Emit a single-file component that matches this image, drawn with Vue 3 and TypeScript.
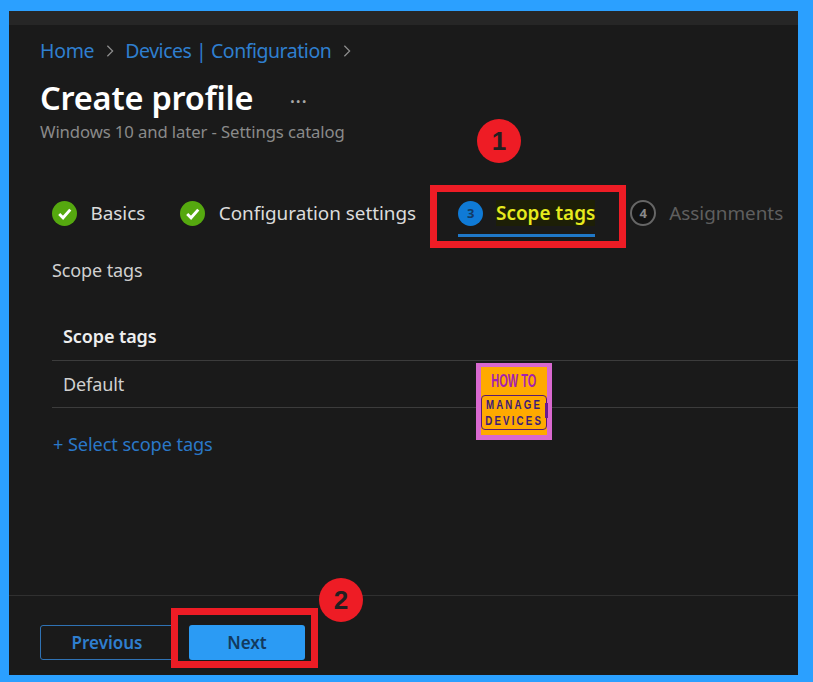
<script setup lang="ts">
interface Step { label: string; state: 'done' | 'current' | 'todo'; num?: number }
const steps: Step[] = [
  { label: 'Basics', state: 'done' },
  { label: 'Configuration settings', state: 'done' },
  { label: 'Scope tags', state: 'current', num: 3 },
  { label: 'Assignments', state: 'todo', num: 4 },
]
</script>

<template>
  <div class="frame">
    <main class="panel">
      <div class="strip"></div>
      <div class="body">
        <nav class="crumbs">
          <a>Home</a>
          <svg class="chev" viewBox="0 0 10 16"><path d="M2 2l6 6-6 6" /></svg>
          <a class="crumb-long">Devices | Configuration</a>
          <svg class="chev" viewBox="0 0 10 16"><path d="M2 2l6 6-6 6" /></svg>
        </nav>
        <div class="title-row">
          <h1>Create profile</h1>
          <span class="dots">···</span>
        </div>
        <p class="sub">Windows 10 and later - Settings catalog</p>

        <div class="steps">
          <div v-for="s in steps" :key="s.label" class="step" :class="s.state">
            <svg v-if="s.state === 'done'" class="ic" viewBox="0 0 26 26">
              <circle cx="13" cy="13" r="13" fill="#55a80f" />
              <path d="M7.5 13.5l4 4 7.5-8.5" fill="none" stroke="#fff" stroke-width="3" />
            </svg>
            <span v-else class="num">{{ s.num }}</span>
            <span class="lbl">{{ s.label }}</span>
          </div>
        </div>

        <div class="section-label">Scope tags</div>
        <div class="table">
          <div class="th">Scope tags</div>
          <div class="td">Default</div>
        </div>
        <a class="add">+ Select scope tags</a>
      </div>

      <footer class="foot">
        <button class="btn prev">Previous</button>
        <button class="btn next">Next</button>
      </footer>
    </main>

    <!-- annotations laid over the screenshot -->
    <div class="box box1"></div>
    <div class="box box2"></div>
    <div class="badge b1">1</div>
    <div class="badge b2">2</div>

    <div class="logo">
      <div class="logo-in">
        <div class="how">HOW TO</div>
        <div class="manage"><span>MANAGE</span><span>DEVICES</span></div>
      </div>
    </div>
  </div>
</template>

<style>
html, body { margin: 0; background: #2ba0ff; }
</style>

<style scoped>
.frame {
  position: relative;
  width: 813px;
  height: 682px;
  box-sizing: border-box;
  padding: 11px 15px 7px 9px;
  background: #2ba0ff;
  font-family: "Noto Sans", "Open Sans", sans-serif;
  overflow: hidden;
}
.panel {
  height: 100%;
  display: flex;
  flex-direction: column;
  background: #1a1a1a;
}
.strip { height: 14px; background: #262626; flex: none; }
.body { flex: 1; display: flex; flex-direction: column; padding: 12px 0 0 31px; min-height: 0; }
.crumbs { display: flex; align-items: center; height: 27px; font-size: 19.5px; color: #2f7fcf; letter-spacing: -0.3px; }
.crumb-long { letter-spacing: -0.47px; }
.chev { width: 10px; height: 14px; margin: 0 10.5px; fill: none; stroke: #8f8f8f; stroke-width: 1.4; }
.title-row { display: flex; align-items: center; height: 44px; margin-top: 12px; }
h1 { margin: 0; font-size: 32.5px; font-weight: 600; color: #fff; letter-spacing: -0.2px; line-height: 44px; }
.dots { margin-left: 36px; color: #a8a8a8; font-size: 22px; line-height: 22px; letter-spacing: 0; position: relative; top: 2px; }
.sub { margin: 1px 0 0; font-size: 16.7px; line-height: 22px; color: #8a8a8a; letter-spacing: -0.1px; }
.steps { display: flex; align-items: center; margin: 55px 0 0 12px; height: 30px; }
.step { display: flex; align-items: center; color: #dcdcdc; font-size: 18.9px; letter-spacing: -0.03px; }
.step .ic { width: 25px; height: 25px; margin-right: 13.5px; flex: none; }
.step:nth-child(1) { margin-right: 35px; }
.step:nth-child(2) { margin-right: 42px; }
.step:nth-child(3) { position: relative; margin-right: 35px; }
.step.current::after {
  content: "";
  position: absolute;
  left: 0; right: 0; bottom: -11px;
  height: 3px;
  background: #1f78c8;
}
.num {
  width: 25px; height: 25px; border-radius: 50%;
  display: flex; align-items: center; justify-content: center;
  font-size: 13px; font-weight: 700; margin-right: 13px; box-sizing: border-box; flex: none;
}
.current .num { background: #0f7ad6; color: #123a66; }
.current .lbl { color: #e6ea1e; font-weight: 600; background: #1d1f06; letter-spacing: 0; }
.todo { color: #5f5f5f; }
.todo .num { border: 2px solid #666; color: #8a8a8a; width: 26px; height: 26px; background: #131313; margin-right: 13px; }
.section-label { margin: 29.5px 0 0 12px; font-size: 18px; line-height: 24px; color: #d0d0d0; letter-spacing: -0.1px; }
.table { margin: 30px 0 0 12px; font-size: 18px; }
.th, .td { padding-left: 11px; display: flex; align-items: center; border-bottom: 1.5px solid #3c3c3c; letter-spacing: -0.1px; }
.th { height: 48px; font-weight: 600; color: #eee; }
.td { height: 46px; color: #d0d0d0; }
.add { margin: 24px 0 0 13px; font-size: 18.2px; line-height: 24px; color: #2a78c8; letter-spacing: -0.1px; }
.foot {
  flex: none;
  height: 80px;
  box-sizing: border-box;
  border-top: 1px solid #303030;
  display: flex;
  gap: 6px;
  padding: 29px 0 0 31px;
}
.btn {
  width: 134px; height: 35px; border-radius: 3px;
  font: 600 17px "Noto Sans", sans-serif; padding: 0;
}
.prev { background: transparent; border: 1.5px solid #2f72b4; color: #2f7fcf; }
.next { background: #2b9bf4; border: none; color: #123a5e; width: 116px; margin-left: 9px; }
.box { position: absolute; border: 7px solid #ee1c25; box-sizing: border-box; pointer-events: none; }
.box1 { left: 430px; top: 185px; width: 196px; height: 63px; }
.box2 { left: 171px; top: 608px; width: 147px; height: 60px; }
.badge {
  position: absolute; width: 44px; height: 44px; border-radius: 50%;
  background: #ee1c25; color: #231f20;
  display: flex; align-items: center; justify-content: center;
  font: 700 26px "Liberation Sans", sans-serif;
}
.b1 { left: 477px; top: 119px; }
.b2 { left: 319px; top: 578px; }
.logo {
  position: absolute; left: 476px; top: 363px; width: 76px; height: 77px;
  background: #d968cf; box-sizing: border-box; padding: 4px 5px 5px;
}
.logo-in {
  height: 100%; background: #ffaa00; display: flex; flex-direction: column; align-items: center;
  font-family: "Liberation Sans", sans-serif; font-weight: 700;
}
.how { font-size: 19px; line-height: 22px; margin-top: 3px; color: #a51fb0; transform: scaleX(0.58); white-space: nowrap; }
.manage {
  position: relative;
  margin-top: 3px; width: 66px; height: 35px; box-sizing: border-box; padding-top: 1px;
  border: 1.5px solid #5a1a70; border-radius: 4px;
  display: flex; flex-direction: column; align-items: center;
  color: #3d1a78; font-size: 13.5px; line-height: 15.6px; letter-spacing: 3px;
}
.manage::after {
  content: ""; position: absolute; right: -1.5px; top: 7px; width: 3px; height: 15px; background: #6a1a90;
}
.manage span { transform: scaleX(0.72); white-space: nowrap; }
</style>
